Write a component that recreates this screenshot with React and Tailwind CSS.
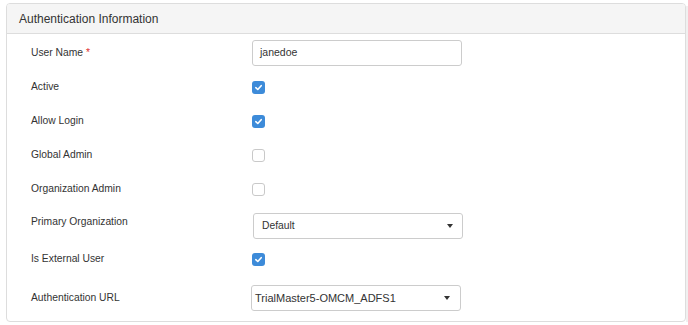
import React from "react";

function Checkbox({ checked }) {
  if (checked) {
    return (
      <span className="flex h-[13px] w-[13px] items-center justify-center rounded-[3px] bg-[#3d8bd9]">
        <svg width="9" height="9" viewBox="0 0 10 10" fill="none">
          <path d="M2 5.2 L4.2 7.2 L8 3" stroke="#fff" strokeWidth="1.8" strokeLinecap="round" strokeLinejoin="round" />
        </svg>
      </span>
    );
  }
  return <span className="block h-[13px] w-[13px] rounded-[3px] border border-[#c9c9c9] bg-white" />;
}

function Caret() {
  return (
    <svg width="6" height="4" viewBox="0 0 6 4">
      <path d="M0 0 H6 L3 4 Z" fill="#333" />
    </svg>
  );
}

function Label({ children, className = "" }) {
  return <div className={"w-[221px] shrink-0 text-[10.3px] text-[#333] " + className}>{children}</div>;
}

export default function App() {
  const font = { fontFamily: '"Liberation Sans", Arial, sans-serif' };

  return (
    <div className="flex h-[325px] w-[688px] bg-white pl-[6px] pt-[3px]" style={font}>
      <div className="h-[319px] w-[680px] overflow-hidden rounded-[4px] border border-[#dddddd] bg-white">
        <div className="flex h-[30px] items-center border-b border-[#dddddd] bg-[#f5f5f5] px-[12px] text-[12px] text-[#333]">
          Authentication Information
        </div>

        <div className="pl-[24px] pt-[2px]">
          <div className="flex h-[34px] items-center">
            <Label>
              User Name <span className="text-[#e0312f]">*</span>
            </Label>
            <div className="flex h-[26px] w-[210px] items-center rounded-[3px] border border-[#cccccc] px-[7px] text-[10.5px] text-[#333]">
              janedoe
            </div>
          </div>

          <div className="flex h-[34px] items-center">
            <Label>Active</Label>
            <Checkbox checked />
          </div>

          <div className="flex h-[34px] items-center">
            <Label>Allow Login</Label>
            <Checkbox checked />
          </div>

          <div className="flex h-[34px] items-center">
            <Label>Global Admin</Label>
            <Checkbox />
          </div>

          <div className="flex h-[34px] items-center">
            <Label>Organization Admin</Label>
            <Checkbox />
          </div>

          <div className="flex h-[38px] items-start pt-[7px]">
            <Label className="pt-[1px]">Primary Organization</Label>
            <div className="ml-[1px] flex h-[26px] w-[210px] items-center justify-between rounded-[3px] border border-[#cccccc] pl-[8px] pr-[9px] text-[10.3px] text-[#333]">
              <span>Default</span>
              <Caret />
            </div>
          </div>

          <div className="flex h-[30px] items-center">
            <Label>Is External User</Label>
            <Checkbox checked />
          </div>

          <div className="flex h-[38px] items-start pt-[11px]">
            <Label className="pt-[5px]">Authentication URL</Label>
            <div className="-ml-[1px] flex h-[26px] w-[210px] items-center justify-between rounded-[3px] border border-[#cccccc] pl-[3px] pr-[10px] text-[11px] text-[#333]">
              <span>TrialMaster5-OMCM_ADFS1</span>
              <Caret />
            </div>
          </div>
        </div>
      </div>
      <div className="mt-[3px] h-[316px] w-[2px] bg-[#f0f0f0]" />
    </div>
  );
}
